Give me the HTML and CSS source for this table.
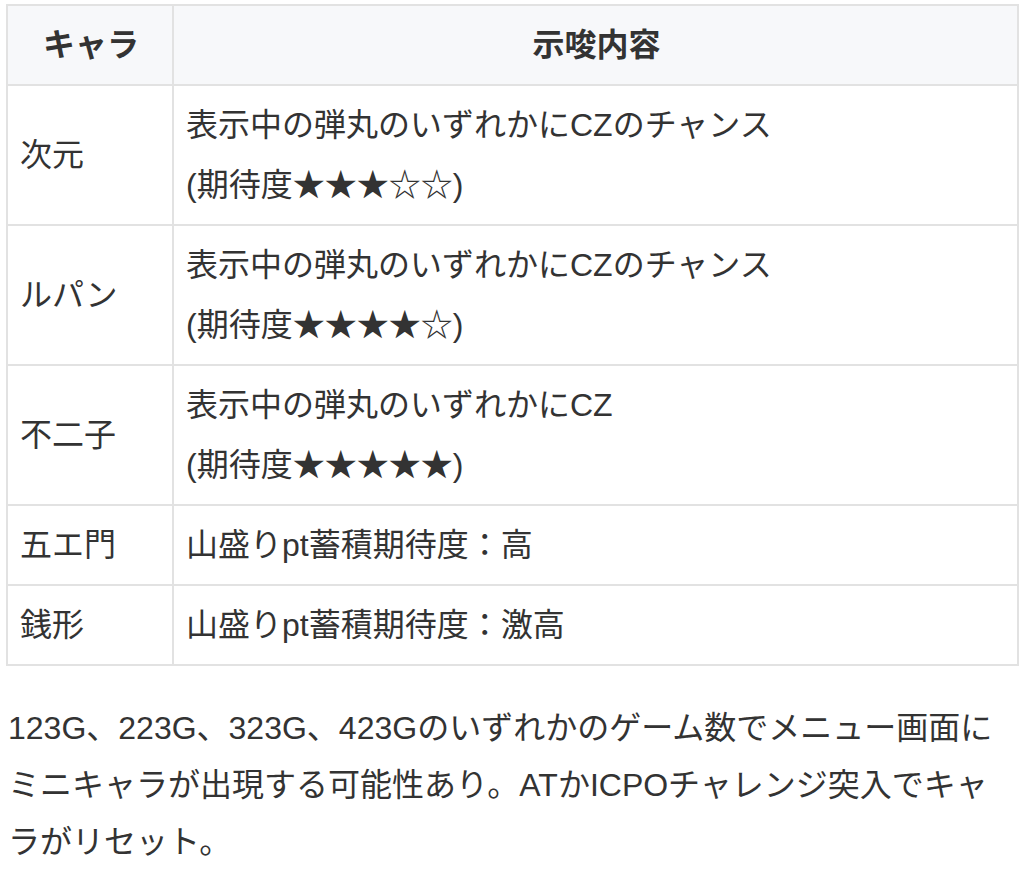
FILE: index.html
```html
<!DOCTYPE html>
<html lang="ja">
<head>
<meta charset="utf-8">
<link rel="stylesheet" href="styles.css">
</head>
<body>
<table class="hint-table">
  <thead>
    <tr><th class="col-chara">キャラ</th><th>示唆内容</th></tr>
  </thead>
  <tbody>
    <tr><td>次元</td><td>表示中の弾丸のいずれかにCZのチャンス<br>(期待度★★★☆☆)</td></tr>
    <tr><td>ルパン</td><td>表示中の弾丸のいずれかにCZのチャンス<br>(期待度★★★★☆)</td></tr>
    <tr><td>不二子</td><td>表示中の弾丸のいずれかにCZ<br>(期待度★★★★★)</td></tr>
    <tr><td>五エ門</td><td>山盛りpt蓄積期待度：高</td></tr>
    <tr><td>銭形</td><td>山盛りpt蓄積期待度：激高</td></tr>
  </tbody>
</table>
<p class="note">123G、223G、323G、423Gのいずれかのゲーム数でメニュー画面にミニキャラが出現する可能性あり。ATかICPOチャレンジ突入でキャラがリセット。</p>
</body>
</html>
```
FILE: styles.css
```css
html, body {
  margin: 0;
  padding: 0;
  background: #fff;
}
body {
  font-family: "Liberation Sans", "Noto Sans CJK JP", sans-serif;
  color: #333;
  font-size: 32px;
  padding: 4px 5px 0 6px;
}
.hint-table {
  width: 1013px;
  border-collapse: collapse;
  border: 2px solid #e2e2e2;
}
.hint-table th,
.hint-table td {
  border: 2px solid #e2e2e2;
  padding: 9px 10px 9px 12px;
  line-height: 60px;
  text-align: left;
  vertical-align: middle;
  font-weight: normal;
}
.hint-table th {
  background: #f7f8fa;
  font-weight: bold;
  text-align: center;
}
.hint-table .col-chara {
  width: 142px;
}
.note {
  margin: 34px 0 0 2px;
  line-height: 57px;
  width: 1000px;
}
```
